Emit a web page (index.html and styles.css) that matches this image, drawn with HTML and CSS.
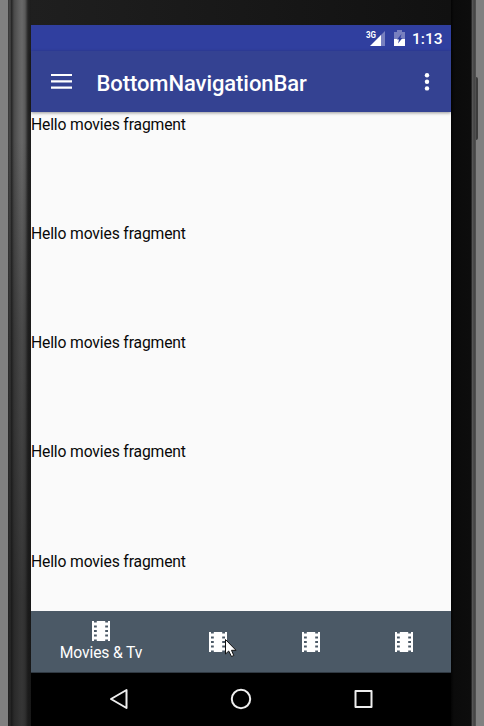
FILE: index.html
```html
<!DOCTYPE html>
<html lang="en">
<head>
<meta charset="utf-8">
<title>BottomNavigationBar</title>
<link rel="stylesheet" href="styles.css">
</head>
<body>
<svg class="defs" width="0" height="0">
  <symbol id="film" viewBox="0 0 18 20">
    <path fill="#fff" fill-rule="evenodd" d="M0 0H2V1.600H4.800V0H13.200V1.600H16V0H18V20H16V18.400H13.200V20H4.800V18.400H2V20H0ZM2 4.600V6.400H4.800V4.600ZM2 9.100V10.900H4.800V9.100ZM2 13.600V15.400H4.800V13.600ZM13.200 4.600V6.400H16V4.600ZM13.200 9.100V10.900H16V9.100ZM13.200 13.600V15.400H16V13.600Z"/>
  </symbol>
</svg>
<div class="device">
  <div class="edge-left"></div>
  <div class="center">
    <div class="bezel-top"></div>
    <div class="screen">
      <div class="status">
        <svg class="signal" width="21" height="18" viewBox="0 0 21 18">
          <path fill="#7880bf" d="M20 1V16H15V6Z"/>
          <path fill="#fff" d="M16 5V16H5Z"/>
          <text x="1" y="8" class="net" textLength="10" lengthAdjust="spacingAndGlyphs">3G</text>
        </svg>
        <svg class="battery" width="11" height="16" viewBox="0 0 11 16">
          <path fill="#7880bf" d="M3 0H8V2H11V9H0V2H3Z"/>
          <path fill="#fff" d="M0 9H11V16H0Z"/>
          <path fill="#303f9f" d="M7.500 4L3 9.500H5L4 13.500L8.500 8H6.500Z"/>
        </svg>
        <span class="time">1:13</span>
      </div>
      <div class="appbar">
        <svg class="menu" width="21" height="15" viewBox="0 0 21 15"><path fill="#fff" d="M0 0H21V2H0ZM0 6.200H21V8.400H0ZM0 12.500H21V14.700H0Z"/></svg>
        <h1 class="title">BottomNavigationBar</h1>
        <svg class="more" width="6" height="20" viewBox="0 0 6 20"><g fill="#fff"><circle cx="3" cy="3.200" r="2.200"/><circle cx="3" cy="9.800" r="2.200"/><circle cx="3" cy="16.400" r="2.200"/></g></svg>
      </div>
      <div class="content">
        <p>Hello movies fragment</p>
        <p>Hello movies fragment</p>
        <p>Hello movies fragment</p>
        <p>Hello movies fragment</p>
        <p>Hello movies fragment</p>
      </div>
      <div class="tabs">
        <div class="tab active"><svg width="18" height="20"><use href="#film"/></svg><span>Movies &amp; Tv</span></div>
        <div class="tab"><svg width="18" height="20"><use href="#film"/></svg>
          <svg class="cursor" width="14" height="21" viewBox="0 0 14 21"><path fill="#fff" stroke="#111" stroke-width="1" d="M1.500 1.500V16L4.700 13L7.500 18.500L9.800 17.500L7.500 12.300H12Z"/></svg>
        </div>
        <div class="tab"><svg width="18" height="20"><use href="#film"/></svg></div>
        <div class="tab"><svg width="18" height="20"><use href="#film"/></svg></div>
      </div>
      <div class="sysnav">
        <svg width="20" height="22" viewBox="0 0 20 22"><path d="M17.500 2V20L2 11Z"/></svg>
        <svg width="22" height="22" viewBox="0 0 22 22"><circle cx="11" cy="11" r="9.200"/></svg>
        <svg width="20" height="20" viewBox="0 0 20 20"><rect x="2.500" y="2" width="16" height="16"/></svg>
      </div>
    </div>
  </div>
  <div class="edge-right"><div class="side-key"></div></div>
</div>
</body>
</html>
```

FILE: styles.css
```css
* { box-sizing: border-box; }
body { margin: 0; overflow: hidden; background: #808080; font-family: Roboto, sans-serif; }
.defs { position: absolute; }
.device { display: flex; width: 484px; height: 726px; }
.edge-left {
  width: 31px;
  background:
    linear-gradient(90deg, #808080 8px, transparent 8px),
    linear-gradient(180deg, transparent 140px, rgba(20,20,20,.35) 330px, rgba(20,20,20,.6) 600px),
    linear-gradient(90deg, #808080 8px, #404040 8px, #333 9px, #555 10px, #242424 11px, #2c2c2c 12px, #4a4a4a 14px, #606060 19px, #686868 22px, #5a5a5a 25px, #252525 28px, #1c1c1c 31px);
}
.center { width: 420px; display: flex; flex-direction: column; }
.bezel-top { height: 25px; background: linear-gradient(90deg, #1f1f1f, #111); }
.edge-right {
  width: 33px;
  background: linear-gradient(90deg, #040404 0, #0b0b0b 3px, #0d0d0d 20px, #444 21px, #666 22px, #303030 23px, #5c5c5c 24px, #444 25px, #808080 25px);
}
.side-key { width: 2px; height: 63px; margin: 77px 0 0 25px; background: #3c3c3c; border-radius: 0 2px 2px 0; }
.screen { height: 701px; display: flex; flex-direction: column; background: #000; }
.status { height: 26px; background: #303f9f; display: flex; align-items: flex-start; justify-content: flex-end; padding-right: 9px; color: #fff; }
.signal { margin: 5px 8px 0 0; }
.net { font: 700 9px Roboto, sans-serif; fill: #fff; }
.battery { margin: 5px 7px 0 0; }
.time { font-size: 15.5px; font-weight: 500; line-height: 18px; margin-top: 5px; width: 30px; white-space: nowrap; }
.appbar { height: 61px; background: #344292; display: flex; align-items: center; padding: 0 21px 0 20px; position: relative; box-shadow: 0 1px 3px rgba(0,0,0,.4); }
.menu { margin-right: 24.5px; }
.title { margin: 4px auto 0 0; color: #fff; font-size: 22px; font-weight: 500; line-height: 26px; letter-spacing: -0.08px; }
.content { height: 499px; background: #fafafa; overflow: hidden; }
.content p { margin: 0; height: 109.300px; padding-top: 3.500px; font-size: 15.700px; line-height: 18px; letter-spacing: -0.150px; color: #080808; white-space: nowrap; }
.tabs { height: 62px; display: flex; background: #4b5966; border-bottom: 1px solid #303942; }
.tab { width: 93px; display: flex; flex-direction: column; align-items: center; justify-content: flex-start; padding-top: 21px; position: relative; }
.active { width: 140px; padding-top: 10px; }
.active span { color: #fff; font-size: 15.700px; line-height: 18px; letter-spacing: -0.150px; margin-top: 2.500px; white-space: nowrap; }
.cursor { position: absolute; left: 53px; top: 27px; }
.sysnav { height: 53px; background: #000; display: flex; align-items: center; justify-content: space-between; padding: 0 78px 2px; }
.sysnav svg { fill: none; stroke: #eee; stroke-width: 2; stroke-linejoin: round; }
```
